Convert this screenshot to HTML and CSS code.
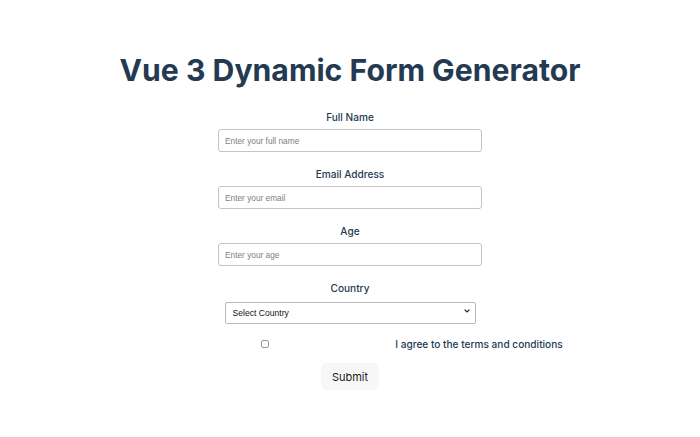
FILE: index.html
```html
<!DOCTYPE html>
<html lang="en">
<head>
<meta charset="utf-8">
<title>Vue 3 Dynamic Form Generator</title>
<link rel="stylesheet" href="styles.css">
</head>
<body>
<div class="app">
  <h1 class="title">Vue 3 Dynamic Form Generator</h1>
  <form class="form">
    <div class="group">
      <label class="label" for="name">Full Name</label>
      <input class="input" id="name" type="text" placeholder="Enter your full name">
    </div>
    <div class="group">
      <label class="label" for="email">Email Address</label>
      <input class="input" id="email" type="email" placeholder="Enter your email">
    </div>
    <div class="group">
      <label class="label" for="age">Age</label>
      <input class="input" id="age" type="number" placeholder="Enter your age">
    </div>
    <div class="group">
      <label class="label" for="country">Country</label>
      <div class="select-wrap">
        <select class="select" id="country">
          <option>Select Country</option>
          <option>United States</option>
          <option>Canada</option>
        </select>
        <svg class="chevron" width="6" height="4" viewBox="0 0 6 4" aria-hidden="true">
          <path d="M0.6 0.6 L3 3 L5.4 0.6" fill="none" stroke="#222" stroke-width="1.1"/>
        </svg>
      </div>
    </div>
    <div class="check-row">
      <span class="check-box-wrap"><input class="check" id="terms" type="checkbox"></span>
      <label class="check-label" for="terms">I agree to the terms and conditions</label>
    </div>
    <button class="submit" type="button">Submit</button>
  </form>
</div>
</body>
</html>
```

FILE: styles.css
```css
html, body {
  margin: 0;
  padding: 0;
  background: #ffffff;
}
body {
  font-family: Inter, "Noto Sans", sans-serif;
  color: #2c3e50;
}
.app {
  display: flex;
  flex-direction: column;
  align-items: center;
  padding-top: 51px;
}
.title {
  margin: 0;
  font-size: 30.2px;
  line-height: 38px;
  font-weight: 700;
  color: #243a52;
}
.form {
  display: flex;
  flex-direction: column;
  align-items: center;
  margin-top: 21px;
}
.group {
  display: flex;
  flex-direction: column;
  align-items: center;
  margin-bottom: 15px;
}
.label {
  font-size: 10.1px;
  line-height: 14px;
  font-weight: 500;
  margin-bottom: 5px;
  color: #243a52;
}
.input {
  box-sizing: border-box;
  width: 264px;
  height: 23px;
  border: 1px solid #c4c4c4;
  border-radius: 3px;
  padding: 0 6px;
  font-family: "Liberation Sans", Arial, sans-serif;
  font-size: 8.3px;
  color: #222;
  outline: none;
  margin: 0;
}
.input::placeholder {
  color: #808080;
}
.input::-webkit-outer-spin-button,
.input::-webkit-inner-spin-button {
  -webkit-appearance: none;
  margin: 0;
}
.select-wrap {
  position: relative;
  width: 251px;
  height: 22px;
}
.select {
  -webkit-appearance: none;
  appearance: none;
  box-sizing: border-box;
  width: 251px;
  height: 22px;
  border: 1px solid #b8b8b8;
  border-radius: 2px;
  padding: 0 7px;
  font-family: "Liberation Sans", Arial, sans-serif;
  font-size: 8.6px;
  color: #111;
  background: #fff;
  margin: 0;
}
.chevron {
  position: absolute;
  right: 6px;
  top: 9px;
  pointer-events: none;
}
.check-row {
  display: flex;
  align-items: center;
  height: 14px;
  margin-bottom: 12px;
}
.check-box-wrap {
  width: 255px;
  display: flex;
  justify-content: center;
  align-items: center;
}
.check {
  -webkit-appearance: none;
  appearance: none;
  box-sizing: border-box;
  width: 8px;
  height: 8px;
  margin: 0;
  border: 1px solid #9a9a9a;
  border-radius: 2px;
  background: #fff;
}
.check-label {
  margin-left: 3px;
  font-size: 10.1px;
  line-height: 14px;
  font-weight: 500;
  color: #243a52;
}
.submit {
  width: 58px;
  height: 27px;
  border: none;
  border-radius: 6px;
  background: #f7f7f7;
  font-family: Inter, "Noto Sans", sans-serif;
  font-size: 11px;
  font-weight: 400;
  color: #1a1a1a;
  padding: 0;
  cursor: pointer;
}
```
